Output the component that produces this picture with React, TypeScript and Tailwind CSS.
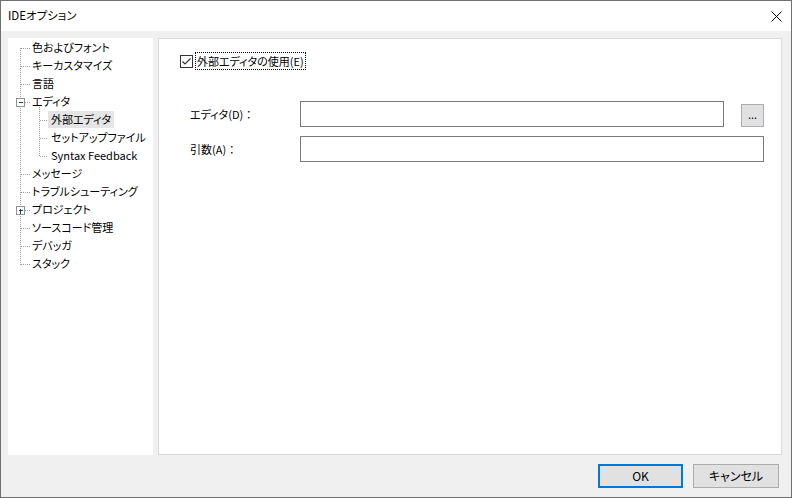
import React from 'react';

type TreeRow = { label: string; level: 0 | 1; selected?: boolean };

const rows: TreeRow[] = [
  { label: '色およびフォント', level: 0 },
  { label: 'キーカスタマイズ', level: 0 },
  { label: '言語', level: 0 },
  { label: 'エディタ', level: 0 },
  { label: '外部エディタ', level: 1, selected: true },
  { label: 'セットアップファイル', level: 1 },
  { label: 'Syntax Feedback', level: 1 },
  { label: 'メッセージ', level: 0 },
  { label: 'トラブルシューティング', level: 0 },
  { label: 'プロジェクト', level: 0 },
  { label: 'ソースコード管理', level: 0 },
  { label: 'デバッガ', level: 0 },
  { label: 'スタック', level: 0 },
];

// y centre of row i inside the tree panel
const cy = (i: number) => 10 + 18 * i + 0.5;

function TreeLines() {
  const dot = { stroke: '#a0a0a0', strokeDasharray: '1 1', shapeRendering: 'crispEdges' as const };
  return (
    <svg className="absolute left-0 top-0 pointer-events-none" width={145} height={417}>
      {/* level 0 trunk */}
      <line x1={12.5} y1={10} x2={12.5} y2={227} {...dot} />
      {rows.map((r, i) =>
        r.level === 0 ? (
          <line key={i} x1={i === 3 || i === 9 ? 17 : 13} y1={cy(i)} x2={22} y2={cy(i)} {...dot} />
        ) : (
          <line key={i} x1={32} y1={cy(i)} x2={40} y2={cy(i)} {...dot} />
        )
      )}
      {/* level 1 trunk */}
      <line x1={31.5} y1={69} x2={31.5} y2={119} {...dot} />
      {[3, 9].map(i => (
        <g key={i} shapeRendering="crispEdges">
          <rect x={8.5} y={cy(i) - 4} width={8} height={8} fill="#fff" stroke="#919191" />
          <line x1={10.5} y1={cy(i)} x2={15} y2={cy(i)} stroke="#1e3f6e" />
          {i === 9 && <line x1={12.5} y1={cy(i) - 2} x2={12.5} y2={cy(i) + 3} stroke="#1e3f6e" />}
        </g>
      ))}
    </svg>
  );
}

function Tree() {
  return (
    <div className="relative w-[145px] h-[417px] bg-white pt-0">
      <TreeLines />
      {rows.map(r => (
        <div
          key={r.label}
          className={
            r.level === 0
              ? 'h-[18px] flex items-center pl-[24px] whitespace-nowrap'
              : 'h-[18px] flex items-center pl-[40px] whitespace-nowrap'
          }
        >
          <span
            className={
              r.selected
                ? 'h-[17px] leading-[17px] px-[3px] bg-[#e5e5e5]'
                : r.level === 1
                ? 'leading-[17px] px-[3px]'
                : 'leading-[17px]'
            }
          >
            {r.label}
          </span>
        </div>
      ))}
    </div>
  );
}

function Checkbox() {
  return (
    <span className="w-[13px] h-[13px] border border-[#333] bg-white flex items-center justify-center">
      <svg width="11" height="11" viewBox="0 0 11 11">
        <path d="M1.5 5.5 L4 8 L9.5 2.5" fill="none" stroke="#333" strokeWidth="1.2" />
      </svg>
    </span>
  );
}

export default function App() {
  return (
    <div
      className="w-[792px] h-[498px] border border-[#6f6f6f] bg-[#f0f0f0] flex flex-col text-[11px] text-black [font-feature-settings:'palt']"
      style={{ fontFamily: '"Noto Sans CJK JP", "Noto Sans", sans-serif' }}
    >
      <div className="h-[30px] bg-white flex items-center justify-between pl-[7px] pr-[9px]">
        <span className="leading-none text-[11.5px]">IDEオプション</span>
        <svg width="11" height="11" viewBox="0 0 11 11">
          <path d="M0.5 0.5 L10.5 10.5 M10.5 0.5 L0.5 10.5" stroke="#000" strokeWidth="1" />
        </svg>
      </div>

      <div className="flex gap-[5px] pl-[7px] pt-[7px]">
        <Tree />
        <div className="w-[624px] h-[417px] bg-white border border-[#dadada] flex flex-col">
          <div className="flex items-center mt-[13px] pl-[21px] h-[18px]">
            <Checkbox />
            <span className="ml-[2px] px-[1px] leading-[16px] border border-dotted border-black whitespace-nowrap">
              外部エディタの使用(E)
            </span>
          </div>

          <div className="flex flex-col gap-[9px] mt-[31px] pl-[31px]">
            <div className="flex items-center">
              <span className="w-[110px] whitespace-nowrap">
                エディタ(D)<span className="[font-feature-settings:normal]">：</span>
              </span>
              <div className="w-[424px] h-[26px] border border-[#7a7a7a] bg-white" />
              <button className="ml-[17px] w-[23px] h-[23px] mt-[3px] border border-[#adadad] bg-[#e1e1e1] text-[11px] leading-none pb-[3px]">
                ...
              </button>
            </div>
            <div className="flex items-center">
              <span className="w-[110px] whitespace-nowrap">
                引数(A)<span className="[font-feature-settings:normal]">：</span>
              </span>
              <div className="w-[464px] h-[26px] border border-[#7a7a7a] bg-white" />
            </div>
          </div>
        </div>
      </div>

      <div className="flex justify-end gap-[10px] pr-[12px] pt-[9px]">
        <button className="w-[85px] h-[24px] border-2 border-[#0078d7] bg-[#e1e1e1] leading-none text-[12px]">OK</button>
        <button className="w-[86px] h-[24px] border border-[#adadad] bg-[#e1e1e1] leading-none text-[12px]">キャンセル</button>
      </div>
    </div>
  );
}
